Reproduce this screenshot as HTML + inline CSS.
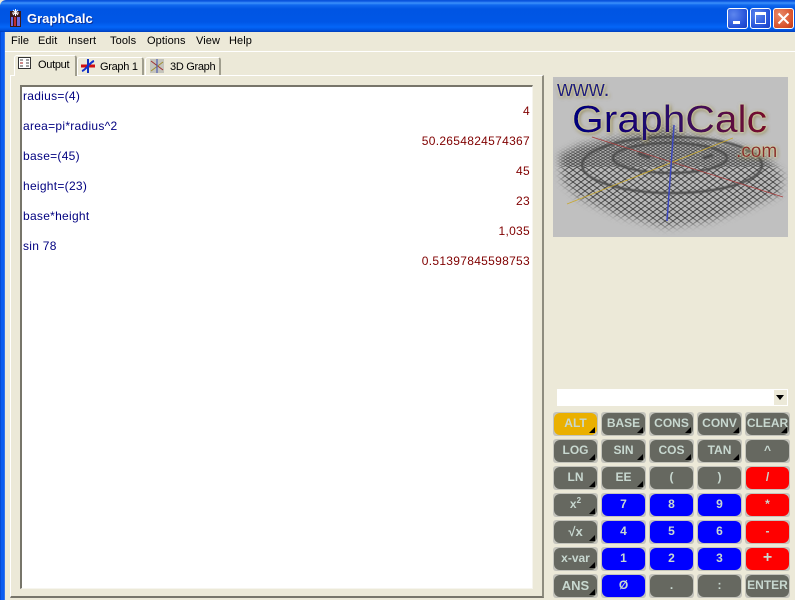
<!DOCTYPE html>
<html><head><meta charset="utf-8"><title>GraphCalc</title>
<style>
html,body{margin:0;padding:0;background:#ece9d8;width:795px;height:600px;overflow:hidden}
#w{position:relative;width:795px;height:600px;overflow:hidden;font-family:"Liberation Sans",sans-serif;background:#ece9d8}
#w div,#w span.a{position:absolute}
.title{left:0;top:0;width:795px;height:32px;background:linear-gradient(#0a53d8 0,#0a55e0 1px,#3c92fb 3px,#1068ee 5px,#0055e3 9px,#0056e6 22px,#0466f8 27px,#0053e0 30px,#003dbb 32px);border-radius:6px 0 0 0}
.lb{left:0;top:32px;width:5px;height:568px;background:linear-gradient(90deg,#0038b8 0,#0a5cf0 1px,#0a5cf0 4px,#5a8ae8 5px)}
.t{left:27px;top:10px;color:#fff;font-weight:bold;font-size:13px;line-height:18px;white-space:nowrap;text-shadow:1px 1px 0 #0a2f9a}
.wb{top:8px;width:19px;height:19px;border:1px solid #fff;border-radius:3px;background:radial-gradient(circle at 30% 30%,#5d86ee,#2350d8 70%,#1a3fbe)}
.m{top:35px;font-size:11px;line-height:13px;color:#000;white-space:nowrap;letter-spacing:.1px}
.tab{background:#ece9d8;border:1px solid #fff;border-right:2px solid #a09e8e;border-bottom:0;border-radius:3px 3px 0 0;box-sizing:border-box;font-size:11px;line-height:14px;color:#000;letter-spacing:-.3px}
.tab span{position:absolute;white-space:nowrap}
.l{left:23px;font-size:12px;line-height:15px;color:#000080;white-space:nowrap;letter-spacing:.28px}
.r{right:265px;font-size:12px;line-height:15px;color:#800000;white-space:nowrap;letter-spacing:.3px}
.b{width:45px;height:24px;background:#c4c4bc;border-radius:3px}
.b i{position:absolute;left:1px;top:1px;right:1px;bottom:1px;border-radius:6px;background:#666860;display:block}
.b b{position:absolute;left:0;right:0;top:4px;text-align:center;font-size:12px;line-height:15px;color:#c8d8d0;font-style:normal;white-space:nowrap;filter:blur(.3px)}
.b u{position:absolute;right:3px;bottom:3px;width:0;height:0;border-left:6px solid transparent;border-bottom:6px solid #000;text-decoration:none;display:block}
.g i{background:#eab000}
.u i{background:#0000ff}
.x i{background:#ff0000}
</style></head><body><div id="w">
<div class="title"></div><div class="lb"></div>
<svg style="position:absolute;left:9px;top:8px" width="14" height="20" viewBox="0 0 14 20"><rect x="1" y="3" width="11" height="16" fill="#3a1818"/><rect x="2" y="9" width="2" height="9" fill="#6a6ae0"/><rect x="5" y="9" width="2" height="9" fill="#c03030"/><rect x="8" y="9" width="3" height="9" fill="#6a6ae0"/><path d="M3 5h7M6.500 1v7M4 2l5 5M9 2l-5 5" stroke="#fff" stroke-width="1"/></svg>
<div class="t">GraphCalc</div>
<div class="wb" style="left:727px"><div style="left:5px;top:12px;width:7px;height:3px;background:#fff"></div></div>
<div class="wb" style="left:750px"><div style="left:4px;top:3px;width:9px;height:8px;border:1px solid #fff;border-top-width:3px"></div></div>
<div class="wb" style="left:773px;background:radial-gradient(circle at 30% 30%,#e88a6a,#d8502a 70%,#b83a18)"><svg style="position:absolute;left:3px;top:3px" width="13" height="13"><path d="M1.500 1.500L11.500 11.500M11.500 1.500L1.500 11.500" stroke="#fff" stroke-width="2"/></svg></div>

<div style="left:5px;top:32px;width:790px;height:19px;background:#ece9d8"></div>
<div style="left:5px;top:51px;width:790px;height:1px;background:#fff"></div>
<div class="m" style="left:11px">File</div><div class="m" style="left:38px">Edit</div><div class="m" style="left:68px">Insert</div><div class="m" style="left:110px">Tools</div><div class="m" style="left:147px">Options</div><div class="m" style="left:196px">View</div><div class="m" style="left:229px">Help</div>

<!-- panel -->
<div style="left:10px;top:75px;width:534px;height:523px;box-sizing:border-box;border:1px solid #fff;border-right:2px solid #8e8c7e;border-bottom:2px solid #77756a;background:#ece9d8"></div>
<div style="left:20px;top:85px;width:513px;height:504px;box-sizing:border-box;background:#fff;border-left:2px solid #77756a;border-top:2px solid #77756a;border-right:1px solid #f6f5ee;border-bottom:1px solid #f6f5ee"></div>

<div class="tab" style="left:77px;top:57px;width:67px;height:18px"><span style="left:22px;top:2px">Graph 1</span>
<svg style="position:absolute;left:3px;top:1px" width="14" height="14"><path d="M0 7H14" stroke="#d01010" stroke-width="3"/><path d="M7 0V14" stroke="#1030c0" stroke-width="2"/><path d="M1 12C5 11 9 3 13 2" stroke="#1030d0" stroke-width="2" fill="none"/></svg></div>
<div class="tab" style="left:145px;top:57px;width:76px;height:18px"><span style="left:24px;top:2px">3D Graph</span>
<svg style="position:absolute;left:4px;top:1px" width="14" height="14"><rect width="14" height="14" fill="#c4c4bc"/><path d="M1 2L13 11" stroke="#a03030"/><path d="M1 12L13 3" stroke="#a09030"/><path d="M7 0V14" stroke="#3a4ab0"/></svg></div>
<div class="tab" style="left:14px;top:55px;width:63px;height:21px"><span style="left:23px;top:2px">Output</span>
<svg style="position:absolute;left:3px;top:1px" width="14" height="13"><rect x=".5" y=".5" width="12" height="11" fill="#fff" stroke="#333"/><path d="M2 3h3M8 3h3M2 6h3M8 6h3M2 9h3M8 9h3" stroke="#444"/><path d="M2 6h3" stroke="#a01010"/></svg></div>

<div class="l" style="top:89px">radius=(4)</div>
<div class="r" style="top:104px">4</div>
<div class="l" style="top:119px">area=pi*radius^2</div>
<div class="r" style="top:134px">50.2654824574367</div>
<div class="l" style="top:149px">base=(45)</div>
<div class="r" style="top:164px">45</div>
<div class="l" style="top:179px">height=(23)</div>
<div class="r" style="top:194px">23</div>
<div class="l" style="top:209px">base*height</div>
<div class="r" style="top:224px">1,035</div>
<div class="l" style="top:239px">sin 78</div>
<div class="r" style="top:254px">0.51397845598753</div>

<!-- logo -->
<svg style="position:absolute;left:553px;top:77px" width="235" height="160" viewBox="0 0 235 160">
<defs>
<pattern id="p1" width="5" height="3" patternUnits="userSpaceOnUse"><rect width="5" height="3" fill="#a8a8a8"/><path d="M0 0L5 3M5 0L0 3" stroke="#3a3a3a" stroke-width=".6"/></pattern>
<pattern id="p2" width="8" height="6" patternUnits="userSpaceOnUse"><rect width="8" height="6" fill="#b6b6b6"/><path d="M0 0L8 6M8 0L0 6" stroke="#333" stroke-width=".8"/></pattern>
<filter id="mb" x="-10%" y="-10%" width="120%" height="120%"><feGaussianBlur stdDeviation="4"/></filter>
<mask id="k"><path d="M6 78L27 68L80 58L120 50L130 58L184 68L214 81L230 98L226 118L196 131L157 144L114 150L64 138L26 121L10 105Z" fill="#fff" filter="url(#mb)"/></mask>
<linearGradient id="tg" x1="0" x2="1" y1="0" y2="0"><stop offset="0" stop-color="#00007c"/><stop offset=".5" stop-color="#2a0a6a"/><stop offset="1" stop-color="#7a0a2a"/></linearGradient>
<filter id="gl" x="-10%" y="-30%" width="120%" height="160%"><feGaussianBlur in="SourceAlpha" stdDeviation="2" result="b"/><feOffset in="b" dx="1" dy="1" result="o"/><feFlood flood-color="#7a6a2a"/><feComposite in2="o" operator="in" result="s"/><feGaussianBlur in="SourceAlpha" stdDeviation="1" result="b2"/><feFlood flood-color="#f4eeb0"/><feComposite in2="b2" operator="in" result="s3"/><feMerge><feMergeNode in="s"/><feMergeNode in="s3"/><feMergeNode in="SourceGraphic"/></feMerge></filter>
<filter id="sb"><feGaussianBlur stdDeviation=".7"/></filter>
<filter id="sc"><feGaussianBlur stdDeviation=".3"/></filter>
</defs>
<rect width="235" height="160" fill="#c0c0c0"/>
<g mask="url(#k)" filter="url(#sc)">
<rect x="0" y="40" width="235" height="50" fill="url(#p1)"/>
<rect x="0" y="90" width="235" height="70" fill="url(#p2)"/>
</g>
<g fill="none" stroke="#4a4a4a" filter="url(#sb)">
<ellipse cx="119" cy="88" rx="90" ry="28" stroke-width="2.200"/>
<ellipse cx="117" cy="81" rx="57" ry="15" stroke-width="2.200"/>
<path d="M85 76l12 5M150 81l10-3" stroke-width="3"/>
</g>
<path d="M39 60L230 120" stroke="#a84040" stroke-width=".8"/>
<path d="M14 127L180 61" stroke="#c8a832" stroke-width=".9"/>
<path d="M121 48L114 144" stroke="#3c48c0" stroke-width="1.500"/>
<text x="4" y="19" font-family="Liberation Sans" font-size="22" fill="#1a1a80" filter="url(#gl)">www.</text>
<text x="19" y="55" font-family="Liberation Sans" font-size="38" textLength="195" lengthAdjust="spacingAndGlyphs" fill="url(#tg)" filter="url(#gl)">GraphCalc</text>
<text x="183" y="80" font-family="Liberation Sans" font-size="19" fill="#8a2a2a" filter="url(#gl)">.com</text>
</svg>

<!-- combo -->
<div style="left:557px;top:389px;width:231px;height:17px;background:#fff"></div>
<div style="left:774px;top:390px;width:13px;height:15px;background:#ece9d8"></div>
<div style="left:776px;top:395px;width:0;height:0;border:4px solid transparent;border-top:5px solid #000"></div>

<!-- row 1 -->
<div class="b g" style="left:553px;top:412px"><i></i><b>ALT</b><u></u></div>
<div class="b" style="left:601px;top:412px"><i></i><b>BASE</b><u></u></div>
<div class="b" style="left:649px;top:412px"><i></i><b>CONS</b><u></u></div>
<div class="b" style="left:697px;top:412px"><i></i><b>CONV</b><u></u></div>
<div class="b" style="left:745px;top:412px"><i></i><b>CLEAR</b><u></u></div>
<!-- row 2 -->
<div class="b" style="left:553px;top:439px"><i></i><b>LOG</b><u></u></div>
<div class="b" style="left:601px;top:439px"><i></i><b>SIN</b><u></u></div>
<div class="b" style="left:649px;top:439px"><i></i><b>COS</b><u></u></div>
<div class="b" style="left:697px;top:439px"><i></i><b>TAN</b><u></u></div>
<div class="b" style="left:745px;top:439px"><i></i><b>^</b></div>
<!-- row 3 -->
<div class="b" style="left:553px;top:466px"><i></i><b>LN</b><u></u></div>
<div class="b" style="left:601px;top:466px"><i></i><b>EE</b><u></u></div>
<div class="b" style="left:649px;top:466px"><i></i><b>(</b></div>
<div class="b" style="left:697px;top:466px"><i></i><b>)</b></div>
<div class="b x" style="left:745px;top:466px"><i></i><b>/</b></div>
<!-- row 4 -->
<div class="b" style="left:553px;top:493px"><i></i><b>x<sup style="font-size:8px;line-height:0">2</sup></b><u></u></div>
<div class="b u" style="left:601px;top:493px"><i></i><b>7</b></div>
<div class="b u" style="left:649px;top:493px"><i></i><b>8</b></div>
<div class="b u" style="left:697px;top:493px"><i></i><b>9</b></div>
<div class="b x" style="left:745px;top:493px"><i></i><b>*</b></div>
<!-- row 5 -->
<div class="b" style="left:553px;top:520px"><i></i><b style="font-size:13px">√x</b><u></u></div>
<div class="b u" style="left:601px;top:520px"><i></i><b>4</b></div>
<div class="b u" style="left:649px;top:520px"><i></i><b>5</b></div>
<div class="b u" style="left:697px;top:520px"><i></i><b>6</b></div>
<div class="b x" style="left:745px;top:520px"><i></i><b>-</b></div>
<!-- row 6 -->
<div class="b" style="left:553px;top:547px"><i></i><b>x-var</b><u></u></div>
<div class="b u" style="left:601px;top:547px"><i></i><b>1</b></div>
<div class="b u" style="left:649px;top:547px"><i></i><b>2</b></div>
<div class="b u" style="left:697px;top:547px"><i></i><b>3</b></div>
<div class="b x" style="left:745px;top:547px"><i></i><b style="font-size:16px;top:3px">+</b></div>
<!-- row 7 -->
<div class="b" style="left:553px;top:574px"><i></i><b style="font-size:13px">ANS</b><u></u></div>
<div class="b u" style="left:601px;top:574px"><i></i><b>Ø</b></div>
<div class="b" style="left:649px;top:574px"><i></i><b>.</b></div>
<div class="b" style="left:697px;top:574px"><i></i><b>:</b></div>
<div class="b" style="left:745px;top:574px"><i></i><b>ENTER</b></div>
</div></body></html>
